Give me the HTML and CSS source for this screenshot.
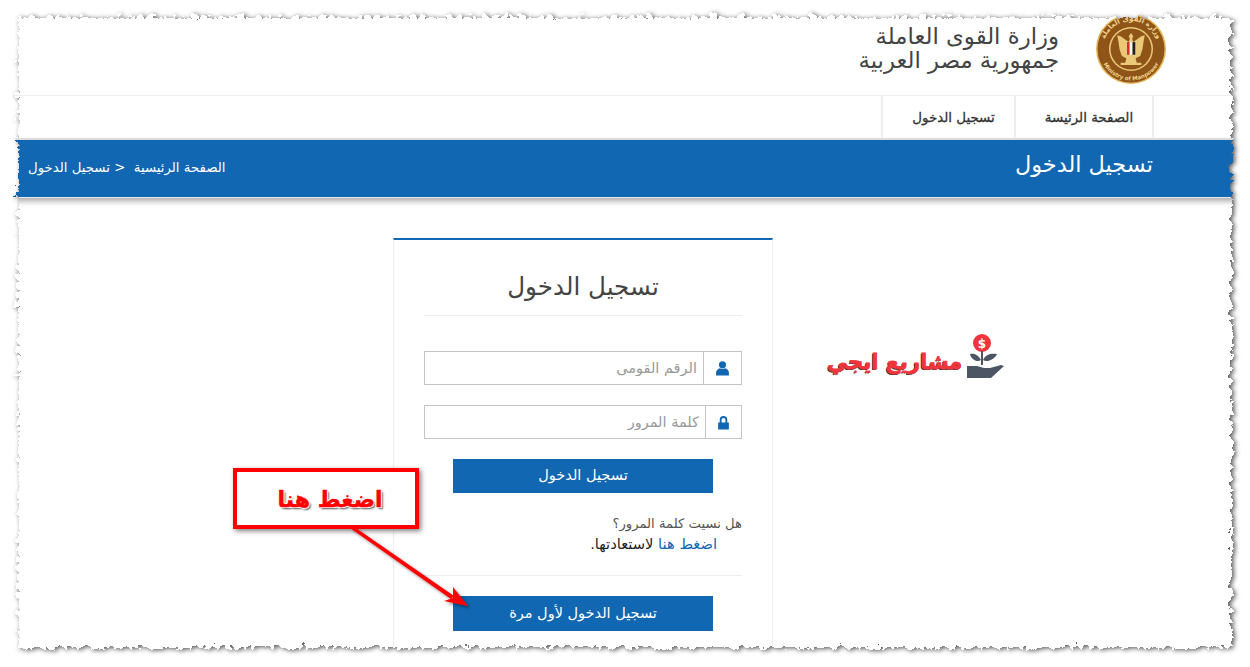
FILE: index.html
```html
<!DOCTYPE html>
<html lang="ar">
<head>
    <meta charset="UTF-8">
    <title>تسجيل الدخول</title>
    <link rel="stylesheet" href="styles.css">
</head>
<body>
    <div class="header">
        <svg class="emblem" viewBox="0 0 70 70" width="70" height="70">
            <defs>
                <path id="ringTop" d="M7 35a28 28 0 0 1 56 0"/>
                <path id="ringBottom" d="M3.500 35a31.500 31.500 0 0 0 63 0"/>
            </defs>
            <circle cx="35" cy="35" r="35" fill="#e3b75a"/>
            <circle cx="35" cy="35" r="33.500" fill="#8f5518"/>
            <circle cx="35" cy="35" r="22" fill="#e9c878"/>
            <circle cx="35" cy="35" r="20.500" fill="#8f5518"/>
            <text class="ring-text"><textPath href="#ringTop" startOffset="50%" text-anchor="middle">وزارة القوى العاملة</textPath></text>
            <text class="ring-text-en"><textPath href="#ringBottom" startOffset="50%" text-anchor="middle">Ministry of Manpower</textPath></text>
            <g transform="translate(35 35) scale(1.150) translate(-35 -34)">
                <path d="M35 20l2 3-1 2 1 3 7-5 3-1-1 5-1 7-2 6-4 2 1 4h4v2H26v-2h4l1-4-4-2-2-6-1-7-1-5 3 1 7 5 1-3-1-2z" fill="#e9c878"/>
                <rect x="31.500" y="28" width="2.400" height="11" fill="#d9322a"/>
                <rect x="33.900" y="28" width="2.400" height="11" fill="#fff"/>
                <rect x="36.300" y="28" width="2.400" height="11" fill="#222"/>
            </g>
        </svg>
        <div class="ministry">
            <div>وزارة القوى العاملة</div>
            <div>جمهورية مصر العربية</div>
        </div>
    </div>

    <div class="nav">
        <a class="nav-item" href="#">الصفحة الرئيسة</a>
        <a class="nav-item" href="#">تسجيل الدخول</a>
    </div>

    <div class="banner">
        <h1>تسجيل الدخول</h1>
        <div class="crumbs">الصفحة الرئيسية &nbsp;&lt; تسجيل الدخول</div>
    </div>

    <div class="main">
        <div class="card">
            <h2>تسجيل الدخول</h2>
            <div class="field">
                <span class="addon addon-user">
                    <svg viewBox="0 0 14 14" width="15" height="15"><circle cx="7" cy="3.600" r="3.300"/><path d="M1 13.500V11c0-2.500 2-3.800 3.600-4.200 1.400.9 3.400.9 4.800 0C11 7.200 13 8.500 13 11v2.500z"/></svg>
                </span>
                <input type="text" placeholder="الرقم القومى">
            </div>
            <div class="field">
                <span class="addon addon-lock">
                    <svg viewBox="0 0 14 14" width="15" height="15"><path d="M2 13.500V7h1.500V4.500a3.500 3.500 0 0 1 7 0V7H12v6.500zM5.200 7h3.600V4.500a1.800 1.800 0 0 0-3.600 0z"/></svg>
                </span>
                <input type="password" placeholder="كلمة المرور">
            </div>
            <a class="btn btn-login" href="#">تسجيل الدخول</a>
            <p class="forgot">هل نسيت كلمة المرور؟</p>
            <p class="recover"><a href="#">اضغط هنا</a> لاستعادتها.</p>
            <a class="btn btn-first" href="#">تسجيل الدخول لأول مرة</a>
        </div>
        <div class="brand">
            <svg class="brand-mark" viewBox="0 0 44 48" width="44" height="48">
                <circle cx="20" cy="10" r="9" fill="#f0353b"/>
                <text class="brand-dollar" x="20" y="14.500">$</text>
                <path d="M20 18v14" stroke="#4c5563" stroke-width="2" fill="none"/>
                <path d="M19 27c-3-6-8-7-11-6 1 5 7 9 11 6zM21 27c3-6 8-7 14-6-2 5-10 9-14 6z" fill="#4c5563"/>
                <path d="M5 33h10l7 2h6l11-3 3 1-13 12H5z" fill="#4c5563"/>
            </svg>
            <span class="brand-name">مشاريع ايجي</span>
        </div>
    </div>

    <div class="callout"><span>اضغط هنا</span></div>
    <svg class="arrow" viewBox="0 0 1250 667" width="1250" height="667">
        <defs>
            <filter id="arrowShadow" x="-20%" y="-20%" width="150%" height="150%">
                <feDropShadow dx="2" dy="2" stdDeviation="1.500" flood-color="#000" flood-opacity=".45"/>
            </filter>
        </defs>
        <g filter="url(#arrowShadow)" fill="#f00">
            <path d="M350 528l3-2 101 70-3 3z"/>
            <path d="M468 606l-24-5 9-3 0-11z"/>
        </g>
    </svg>

    <!-- torn paper edge of the screenshot -->
    <svg class="torn" viewBox="0 0 1250 667" width="1250" height="667">
        <defs>
            <filter id="tornEdge" filterUnits="userSpaceOnUse" x="0" y="0" width="1250" height="667" color-interpolation-filters="sRGB">
                <feTurbulence type="turbulence" baseFrequency=".11" numOctaves="2" seed="7" result="noise"/>
                <feDisplacementMap in="SourceGraphic" in2="noise" scale="11" xChannelSelector="R" yChannelSelector="G" result="page"/>
                <feGaussianBlur in="page" stdDeviation="2.500" result="blur"/>
                <feOffset in="blur" dx="2" dy="1" result="shadow"/>
                <feFlood flood-color="#fff" result="paper"/>
                <feMerge result="outside">
                    <feMergeNode in="paper"/>
                    <feMergeNode in="shadow"/>
                </feMerge>
                <feComposite in="outside" in2="page" operator="out"/>
            </filter>
        </defs>
        <rect x="15" y="14" width="1214" height="631" fill="#555" filter="url(#tornEdge)"/>
    </svg>
</body>
</html>
```

FILE: styles.css
```css
* {
    box-sizing: border-box;
    margin: 0;
    padding: 0;
    font-family: "DejaVu Sans", "Noto Sans", sans-serif;
}

html, body {
    height: 100vh;
    overflow: hidden;
    background-color: white;
}

a {
    text-decoration: none;
}

.header {
    direction: rtl;
    display: flex;
    align-items: center;
    gap: 37px;
    height: 96px;
    padding: 3px 84px 0 0;
    border-bottom: 1px solid #eee;
}

.ring-text {
    font-size: 7px;
    font-weight: bold;
    fill: #f0d488;
}

.ring-text-en {
    font-size: 5.500px;
    font-weight: bold;
    fill: #f0d488;
}

.ministry {
    font-size: 22.800px;
    line-height: 24px;
    color: #444;
    margin-top: -2px;
}

.nav {
    direction: rtl;
    display: flex;
    height: 44px;
    padding-right: 96px;
    border-bottom: 2px solid #e4e4e4;
}

.nav-item {
    display: flex;
    align-items: center;
    justify-content: center;
    width: 133px;
    padding-left: 10px;
    font-size: 13.400px;
    -webkit-text-stroke: 0.3px #333;
    color: #333;
    border-left: 2px solid #eee;
}

.nav-item:first-child {
    width: 140px;
    border-right: 2px solid #eee;
}

.banner {
    direction: rtl;
    display: flex;
    align-items: center;
    justify-content: space-between;
    height: 58px;
    padding: 0 97px 0 28px;
    background-color: #1167b1;
    color: white;
    border-bottom: 1px solid #e8e8e8;
    box-shadow: 0 3px 6px rgba(0, 0, 0, 0.35);
}

.banner h1 {
    font-size: 22.400px;
    font-weight: normal;
    margin-top: -10px;
}

.crumbs {
    font-size: 13.300px;
    margin-top: -2px;
}

.main {
    display: flex;
    align-items: flex-start;
    padding: 40px 0 0 393px;
}

.card {
    direction: rtl;
    width: 380px;
    height: 429px;
    padding: 0 30px;
    border: 1px solid #eee;
    border-top: 2px solid #1167b1;
    background-color: white;
}

.card h2 {
    height: 76px;
    padding-top: 32px;
    margin-bottom: 35px;
    font-size: 24.600px;
    font-weight: normal;
    text-align: center;
    color: #444;
    border-bottom: 1px solid #eee;
}

.field {
    display: flex;
    height: 34px;
    margin-bottom: 20px;
    border: 1px solid #c4c4c4;
}

.addon {
    display: flex;
    align-items: center;
    justify-content: center;
    flex: none;
    border-left: 1px solid #c4c4c4;
}

.addon svg {
    fill: #1167b1;
}

.addon-user {
    width: 38px;
}

.addon-lock {
    width: 36px;
}

.field input {
    flex: 1;
    min-width: 0;
    border: none;
    outline: none;
    padding: 0 6px;
    direction: rtl;
    font-size: 14.500px;
    background-color: white;
}

.field input::placeholder {
    color: #999;
}

.btn {
    display: flex;
    align-items: center;
    justify-content: center;
    width: 260px;
    margin: 0 auto;
    padding-bottom: 2px;
    background-color: #1167b1;
    color: white;
    font-size: 14.500px;
}

.btn-login {
    height: 34px;
}

.forgot {
    margin-top: 21px;
    font-size: 13.200px;
    line-height: 20px;
    color: #555;
}

.recover {
    padding-right: 25px;
    padding-bottom: 21px;
    font-size: 14.700px;
    line-height: 20px;
    color: #222;
    border-bottom: 1px solid #eee;
}

.recover a {
    color: #1167b1;
}

.btn-first {
    height: 35px;
    margin-top: 20px;
}

.brand {
    display: flex;
    align-items: flex-end;
    flex-direction: row-reverse;
    margin: 95px 0 0 52px;
}

.brand-dollar {
    font-size: 12px;
    font-weight: bold;
    fill: white;
    text-anchor: middle;
}

.brand-name {
    direction: rtl;
    margin-bottom: 4px;
    margin-left: 2px;
    font-size: 21px;
    font-weight: bold;
    line-height: 30px;
    color: #f0353b;
    -webkit-text-stroke: 0.8px #f0353b;
    text-shadow: -1px 1px 0 #333;
}

.callout {
    position: absolute;
    left: 233px;
    top: 468px;
    width: 186px;
    height: 61px;
    padding: 15px 0 0 8px;
    direction: rtl;
    text-align: center;
    background-color: white;
    border: 4px solid #f00;
    box-shadow: 2px 2px 5px rgba(0, 0, 0, 0.5);
}

.callout span {
    font-size: 22px;
    font-weight: bold;
    color: #f00;
    -webkit-text-stroke: 0.5px #f00;
    text-shadow: 1px 1px 0 white, -1px -1px 0 white, 1px -1px 0 white, -1px 1px 0 white, 2px 2px 2px #555;
}

.arrow {
    position: absolute;
    left: 0;
    top: 0;
}

.torn {
    position: absolute;
    left: 0;
    top: 0;
    pointer-events: none;
}
```
